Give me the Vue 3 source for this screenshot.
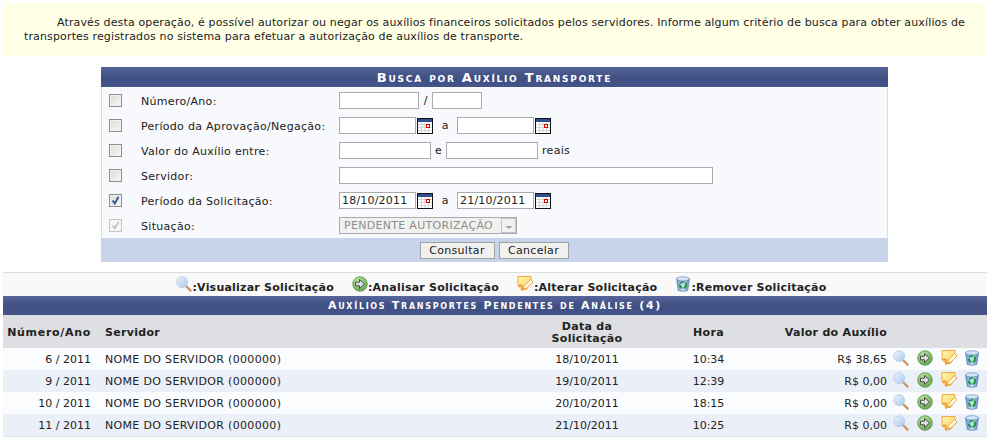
<script setup>
const rows = [
  { num: '6 / 2011', date: '18/10/2011', hora: '10:34', valor: 'R$ 38,65' },
  { num: '9 / 2011', date: '19/10/2011', hora: '12:39', valor: 'R$ 0,00' },
  { num: '10 / 2011', date: '20/10/2011', hora: '18:15', valor: 'R$ 0,00' },
  { num: '11 / 2011', date: '21/10/2011', hora: '10:25', valor: 'R$ 0,00' }
]
</script>

<template>
  <div class="page">
    <svg class="defs" aria-hidden="true">
      <defs>
        <linearGradient id="lens" x1="0" y1="0" x2="1" y2="1"><stop offset="0" stop-color="#eef5fd"/><stop offset="1" stop-color="#a9c6ec"/></linearGradient>
        <radialGradient id="ball" cx=".4" cy=".3" r=".8"><stop offset="0" stop-color="#c2e6a4"/><stop offset="1" stop-color="#57a046"/></radialGradient>
        <linearGradient id="note" x1="0" y1="0" x2="1" y2="1"><stop offset="0" stop-color="#fff4b0"/><stop offset="1" stop-color="#f9d35f"/></linearGradient>
        <linearGradient id="bin" x1="0" y1="0" x2="1" y2="0"><stop offset="0" stop-color="#5f8fd0"/><stop offset=".5" stop-color="#cfe0f5"/><stop offset="1" stop-color="#5a84bf"/></linearGradient>
        <symbol id="i-search" viewBox="0 0 16 16">
          <path d="M10 10 14.600 14.600" stroke="#c8935c" stroke-width="2.200" stroke-linecap="round"/>
          <circle cx="6.200" cy="6.200" r="5.500" fill="url(#lens)" stroke="#b3cbea" stroke-width=".8"/>
        </symbol>
        <symbol id="i-go" viewBox="0 0 16 16">
          <circle cx="8" cy="8" r="7.300" fill="url(#ball)" stroke="#4b8c3b" stroke-width=".7"/>
          <path d="M3.500 6.200H7.500V3.500L12.500 8 7.500 12.500V9.800H3.500Z" fill="#dedede" stroke="#4a4a4a" stroke-width="1"/>
        </symbol>
        <symbol id="i-edit" viewBox="0 0 17 17">
          <path d="M1 1.500H14V7.500L9.500 14.500H5L1 10.500Z" fill="url(#note)" stroke="#efa93e"/>
          <path d="M5 16V10.500H1.500" fill="none" stroke="#e4902a" stroke-width="1.300"/>
          <path d="M6.500 14 7.500 10.500 13.500 4.500 16 7 10 13Z" fill="#fff8dc" stroke="#e8a545" stroke-width="1"/>
        </symbol>
        <symbol id="i-bin" viewBox="0 0 16 17">
          <path d="M1.200 3.200 3 15.400Q8 17.200 13 15.400L14.800 3.200Z" fill="url(#bin)" stroke="#5a80b5" stroke-width=".8"/>
          <ellipse cx="8" cy="3" rx="7" ry="2.200" fill="#d6e5f5" stroke="#6a92c8" stroke-width=".8"/>
          <circle cx="8" cy="9.500" r="3.300" fill="none" stroke="#1f9a3c" stroke-width="2" stroke-dasharray="4.500 1.400"/>
        </symbol>
        <symbol id="i-cal" viewBox="0 0 16 16">
          <rect x=".5" y=".5" width="15" height="15" fill="#fff" stroke="#111"/>
          <rect x="1" y="1" width="14" height="3" fill="#2f4f8f"/>
          <path d="M1 6.500H15M1 9.500H15M1 12.500H15M4.500 4V15M8 4V15M11.500 4V15" stroke="#d4d4d4"/>
          <rect x="9.500" y="6.500" width="3" height="3" fill="#fff" stroke="#e00000"/>
        </symbol>
      </defs>
    </svg>

    <div class="intro">
      <p>Através desta operação, é possível autorizar ou negar os auxílios financeiros solicitados pelos servidores. Informe algum critério de busca para obter auxílios de transportes registrados no sistema para efetuar a autorização de auxílios de transporte.</p>
    </div>

    <form class="search" @submit.prevent>
      <div class="bar bar-lg">Busca por Auxílio Transporte</div>
      <div class="fields">
        <span class="box"></span>
        <label>Número/Ano:</label>
        <div class="ctl"><input class="w80" /><span class="sep-slash">/</span><input class="w50" /></div>

        <span class="box"></span>
        <label>Período da Aprovação/Negação:</label>
        <div class="ctl">
          <input class="w77" /><svg class="cal"><use href="#i-cal" /></svg><span class="sep-a">a</span><input class="w77" /><svg class="cal"><use href="#i-cal" /></svg>
        </div>

        <span class="box"></span>
        <label>Valor do Auxílio entre:</label>
        <div class="ctl"><input class="w92" /><span class="sep-e">e</span><input class="w92" /><span class="reais">reais</span></div>

        <span class="box"></span>
        <label>Servidor:</label>
        <div class="ctl"><input class="w374" /></div>

        <span class="box checked">
          <svg viewBox="0 0 11 11"><path d="M2.500 5.500 4.800 8.500 8.500 1.800" fill="none" stroke="#3a5a9c" stroke-width="2"/></svg>
        </span>
        <label>Período da Solicitação:</label>
        <div class="ctl">
          <input class="w77" value="18/10/2011" /><svg class="cal"><use href="#i-cal" /></svg><span class="sep-a">a</span><input class="w77" value="21/10/2011" /><svg class="cal"><use href="#i-cal" /></svg>
        </div>

        <span class="box disabled">
          <svg viewBox="0 0 11 11"><path d="M2.500 5.500 4.800 8.500 8.500 1.800" fill="none" stroke="#bdbdbd" stroke-width="1.600"/></svg>
        </span>
        <label>Situação:</label>
        <div class="ctl">
          <div class="select"><span>PENDENTE AUTORIZAÇÃO</span><i><b></b></i></div>
        </div>
      </div>
      <div class="actions">
        <button class="b-con" type="button">Consultar</button>
        <button class="b-can" type="button">Cancelar</button>
      </div>
    </form>

    <div class="legend">
      <span class="lg"><svg class="li s16"><use href="#i-search" /></svg>:Visualizar Solicitação</span>
      <span class="lg"><svg class="li s16"><use href="#i-go" /></svg>:Analisar Solicitação</span>
      <span class="lg"><svg class="li s17"><use href="#i-edit" /></svg>:Alterar Solicitação</span>
      <span class="lg"><svg class="li s16"><use href="#i-bin" /></svg>:Remover Solicitação</span>
    </div>

    <div class="results">
      <div class="bar bar-sm">Auxílios Transportes Pendentes de Análise (4)</div>
      <table>
        <colgroup>
          <col class="c-num" /><col class="c-srv" /><col class="c-date" /><col class="c-hora" /><col class="c-val" /><col class="c-ic" /><col class="c-ic2" /><col class="c-ic3" /><col class="c-ic4" />
        </colgroup>
        <thead>
          <tr>
            <th class="r wide">Número/Ano</th>
            <th class="srv">Servidor</th>
            <th class="c">Data da<br />Solicitação</th>
            <th class="c">Hora</th>
            <th class="r">Valor do Auxílio</th>
            <th colspan="4"></th>
          </tr>
        </thead>
        <tbody>
          <tr v-for="row in rows" :key="row.num">
            <td class="r first">{{ row.num }}</td>
            <td class="srv caps">NOME DO SERVIDOR (000000)</td>
            <td class="c">{{ row.date }}</td>
            <td class="c">{{ row.hora }}</td>
            <td class="r">{{ row.valor }}</td>
            <td class="ic"><svg class="s16"><use href="#i-search" /></svg></td>
            <td class="ic"><svg class="s16"><use href="#i-go" /></svg></td>
            <td class="ic"><svg class="s17"><use href="#i-edit" /></svg></td>
            <td class="ic last"><svg class="s16"><use href="#i-bin" /></svg></td>
          </tr>
        </tbody>
      </table>
    </div>
  </div>
</template>

<style>
html, body { margin: 0; background: #fff; }
</style>

<style scoped>
.page {
  width: 990px;
  height: 440px;
  overflow: hidden;
  position: relative;
  box-sizing: border-box;
  padding-top: 3px;
  font-family: "DejaVu Sans", Verdana, sans-serif;
  font-size: 11px;
  color: #222;
}
.defs { position: absolute; width: 0; height: 0; }

.intro {
  margin-left: 3px;
  width: 982px;
  height: 53px;
  box-sizing: border-box;
  padding: 13px 20px 0 21px;
  background: #ffffe6;
}
.intro p { margin: 0; line-height: 14px; text-indent: 33px; font-size: 11px; letter-spacing: .14px; }

.search {
  margin: 11px 0 0 101px;
  width: 787px;
}
.bar {
  display: flex;
  align-items: center;
  justify-content: center;
  color: #fff;
  font-weight: bold;
  font-variant: small-caps;
  background: linear-gradient(#56659a 0, #404f82 55%, #45558a 100%);
}
.bar-lg { height: 20px; font-size: 13px; letter-spacing: 1.75px; }
.bar-sm { height: 19px; font-size: 11px; letter-spacing: 1.7px; }

.fields {
  display: grid;
  grid-template-columns: 39px 198px 1fr;
  grid-auto-rows: 25px;
  align-items: center;
  padding: 1px 0 0;
  background: #f8f9fc;
  border-left: 1px solid #d8dce8;
  border-right: 1px solid #d8dce8;
  height: 151px;
  box-sizing: border-box;
}
.fields label { color: #222; letter-spacing: .3px; padding-top: 2px; }
.box {
  display: block;
  margin-left: 7px;
  width: 11px;
  height: 11px;
  border: 1px solid #8e8e8e;
  background: linear-gradient(135deg, #dcdcd8, #f7f7f5);
  box-shadow: inset 0 0 0 1px #f2f2f0;
}
.box svg { display: block; width: 11px; height: 11px; }
.box.disabled { border-color: #c4c4c4; background: #f6f6f4; box-shadow: none; }

.ctl { display: flex; align-items: center; }
input {
  box-sizing: border-box;
  height: 17px;
  margin: 0;
  padding: 0 1px 0 2px;
  border: 1px solid #ababab;
  background: #fff;
  font: 11px "DejaVu Sans", Verdana, sans-serif;
  letter-spacing: .2px;
  color: #222;
  outline: none;
}
.w80 { width: 80px; }
.w50 { width: 50px; }
.w77 { width: 77px; }
.w92 { width: 92px; }
.w374 { width: 374px; }
.cal { width: 16px; height: 16px; margin-left: 1px; flex: none; }
.sep-slash { width: 13px; text-align: center; }
.sep-a { width: 24px; text-align: center; }
.sep-e { width: 15px; text-align: center; }
.reais { margin-left: 4px; letter-spacing: .3px; }

.select {
  box-sizing: border-box;
  width: 178px;
  height: 17px;
  display: flex;
  align-items: center;
  justify-content: space-between;
  border: 1px solid #ababab;
  background: #f1f1ef;
  color: #8e8e8e;
  padding-left: 4px;
  letter-spacing: .3px;
}
.select i {
  width: 15px;
  height: 15px;
  box-sizing: border-box;
  border: 1px solid #c4c4c4;
  background: #f2f2f0;
  display: flex;
  align-items: center;
  justify-content: center;
}
.select b {
  margin-top: 3px;
  border-left: 4px solid transparent;
  border-right: 4px solid transparent;
  border-top: 3px solid #a8a8a8;
}

.actions {
  height: 24px;
  display: flex;
  align-items: center;
  justify-content: center;
  gap: 4px;
  padding-right: 1px;
  background: #c8d4ea;
}
button {
  box-sizing: border-box;
  height: 17px;
  padding: 0;
  border: 1px solid #a0a0a0;
  background: #f1f1ef;
  font: 11px "DejaVu Sans", Verdana, sans-serif;
  color: #222;
  letter-spacing: .3px;
}
.b-con { width: 75px; }
.b-can { width: 70px; }

.legend {
  margin: 10px 0 0 3px;
  width: 984px;
  height: 24px;
  box-sizing: border-box;
  border-top: 1px solid #dcdcdc;
  display: flex;
  align-items: center;
  justify-content: center;
  gap: 18px;
  padding: 5px 0 0 13px;
  background: #f9f9f9;
  font-weight: bold;
  letter-spacing: .22px;
  color: #222;
}
.lg { display: flex; align-items: center; white-space: nowrap; }
.li { margin-top: -7px; }
.s16 { width: 16px; height: 16px; display: block; }
.s17 { width: 17px; height: 17px; display: block; }

.results { margin-left: 3px; width: 984px; }
table {
  width: 984px;
  table-layout: fixed;
  border-collapse: collapse;
}
.c-num { width: 92px; }
.c-srv { width: 407px; }
.c-date { width: 170px; }
.c-hora { width: 73px; }
.c-val { width: 143px; }
.c-ic { width: 26px; }
.c-ic2 { width: 22px; }
.c-ic3 { width: 26px; }
.c-ic4 { width: 25px; }
thead tr { height: 33px; background: #dedfe3; }
th {
  padding: 3px 0 0 6px;
  text-align: left;
  font-weight: bold;
  line-height: 12px;
  color: #222;
  letter-spacing: .3px;
}
td { padding: 1px 0 0 6px; color: #222; white-space: nowrap; }
th.r, td.r { text-align: right; padding-right: 1px; padding-left: 0; }
th.c, td.c { text-align: center; padding-left: 0; padding-right: 0; }
th.r.wide { letter-spacing: .7px; padding-right: 4px; }
td.r.first { padding-right: 4px; }
th.srv, td.srv { padding-left: 10px; }
.caps { letter-spacing: .33px; }
tbody tr { height: 22px; background: #fbfcfe; }
tbody tr:nth-child(even) { background: #ebf0f8; }
td.ic { padding: 0; }
td.ic.last { padding-right: 6px; }
td.ic svg { margin: -3px auto 0; }
tbody { border-bottom: 1px solid #e2e5ea; }
</style>
